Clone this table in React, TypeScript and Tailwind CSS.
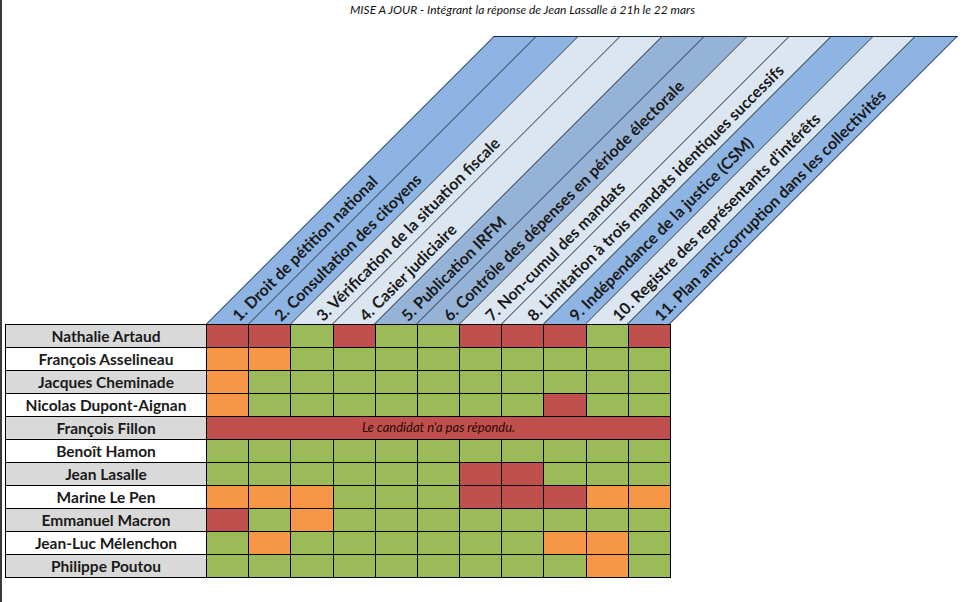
import React from "react";

// Tableau des engagements anticorruption par candidat
const criteres = [
  "1. Droit de pétition national",
  "2. Consultation des citoyens",
  "3. Vérification de la situation fiscale",
  "4. Casier judiciaire",
  "5. Publication IRFM",
  "6. Contrôle des dépenses en période électorale",
  "7. Non-cumul des mandats",
  "8. Limitation à trois mandats identiques successifs",
  "9. Indépendance de la justice (CSM)",
  "10. Registre des représentants d’intérêts",
  "11. Plan anti-corruption dans les collectivités",
];

const stripeBg = [
  "bg-[#8db4e2]",
  "bg-[#8db4e2]",
  "bg-[#dce6f1]",
  "bg-[#dce6f1]",
  "bg-[#95b3d7]",
  "bg-[#95b3d7]",
  "bg-[#dce6f1]",
  "bg-[#dce6f1]",
  "bg-[#8db4e2]",
  "bg-[#dce6f1]",
  "bg-[#8db4e2]",
];

const cellBg: Record<string, string> = {
  r: "bg-[#c0504d]",
  o: "bg-[#f79646]",
  g: "bg-[#9bbb59]",
};

const candidats: { name: string; cells: string | null }[] = [
  { name: "Nathalie Artaud", cells: "rrgrggrrrgr" },
  { name: "François Asselineau", cells: "ooggggggggg" },
  { name: "Jacques Cheminade", cells: "ogggggggggg" },
  { name: "Nicolas Dupont-Aignan", cells: "ogggggggrgg" },
  { name: "François Fillon", cells: null },
  { name: "Benoît Hamon", cells: "ggggggggggg" },
  { name: "Jean Lasalle", cells: "ggggggrrggg" },
  { name: "Marine Le Pen", cells: "ooogggrrroo" },
  { name: "Emmanuel Macron", cells: "rgogggggggg" },
  { name: "Jean-Luc Mélenchon", cells: "goggggggoog" },
  { name: "Philippe Poutou", cells: "gggggggggog" },
];

function Header() {
  return (
    <div className="relative h-[288px] mt-[16px]">
      <div className="ml-[204px] w-[464px] h-full flex origin-bottom-left [transform:skewX(-45deg)]">
        {stripeBg.map((bg, i) => (
          <div
            key={i}
            className={`flex-1 border-t border-l border-[#1b2636] ${bg} ${i === 10 ? "border-r" : ""}`}
          />
        ))}
      </div>
      {criteres.map((label, i) => (
        <div
          key={label}
          className="absolute top-[267px] h-[30px] leading-[30px] whitespace-nowrap origin-left [transform:rotate(-45deg)] text-[16px] font-bold text-[#1a1a1a]"
          style={{ left: 233 + 42.18 * i }}
        >
          {label}
        </div>
      ))}
    </div>
  );
}

function Table() {
  return (
    <div className="ml-[3px] w-[666px] border border-black divide-y divide-black">
      {candidats.map((c, r) => (
        <div key={c.name} className="flex h-[22px] box-content">
          <div
            className={`w-[200px] pt-[2px] flex items-center justify-center text-[15.5px] font-bold text-[#1a1a1a] ${
              r % 2 === 0 ? "bg-[#d9d9d9]" : "bg-white"
            }`}
          >
            {c.name}
          </div>
          {c.cells ? (
            <div className="w-[464px] grid grid-cols-11">
              {c.cells.split("").map((k, j) => (
                <div key={j} className={`border-l border-black ${cellBg[k]}`} />
              ))}
            </div>
          ) : (
            <div className="w-[464px] border-l border-black bg-[#c0504d] flex items-center justify-center text-[13px] italic text-[#2a0808]">
              Le candidat n'a pas répondu.
            </div>
          )}
        </div>
      ))}
    </div>
  );
}

export default function App() {
  return (
    <div className="w-[971px] h-[602px] bg-white border-l-2 border-[#3a3a3a] overflow-hidden font-['Lato',sans-serif]">
      <p className="h-[20px] pt-[3px] pl-[72px] text-center text-[12px] italic text-[#111] leading-[14px]">
        MISE A JOUR - Intégrant la réponse de Jean Lassalle à 21h le 22 mars
      </p>
      <Header />
      <Table />
    </div>
  );
}
